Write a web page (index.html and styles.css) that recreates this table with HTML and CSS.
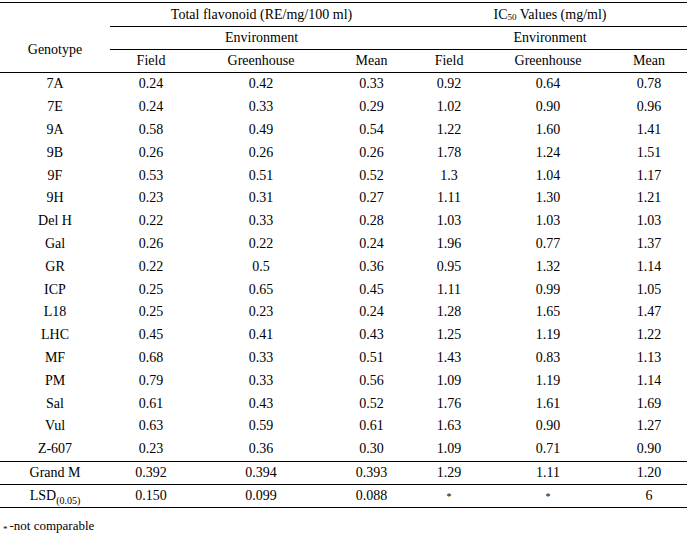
FILE: index.html
```html
<!DOCTYPE html>
<html>
<head>
<meta charset="utf-8">
<link rel="stylesheet" href="styles.css">
</head>
<body>
<table class="tbl">
  <colgroup>
    <col class="c-geno">
    <col class="c-f1">
    <col class="c-g1">
    <col class="c-m1">
    <col class="c-f2">
    <col class="c-g2">
    <col class="c-m2">
  </colgroup>
  <thead>
    <tr class="h1">
      <th class="top"></th>
      <th colspan="3" class="top rule">Total flavonoid (RE/mg/100 ml)</th>
      <th colspan="3" class="top rule">IC<sub class="sub50">50</sub> Values (mg/ml)</th>
    </tr>
    <tr class="h2">
      <th rowspan="2" class="rule">Genotype</th>
      <th colspan="3" class="rule">Environment</th>
      <th colspan="3" class="rule">Environment</th>
    </tr>
    <tr class="h3">
      <th class="rule">Field</th>
      <th class="rule">Greenhouse</th>
      <th class="rule">Mean</th>
      <th class="rule">Field</th>
      <th class="rule">Greenhouse</th>
      <th class="rule">Mean</th>
    </tr>
  </thead>
  <tbody>
    <tr><td>7A</td><td>0.24</td><td>0.42</td><td>0.33</td><td>0.92</td><td>0.64</td><td>0.78</td></tr>
    <tr><td>7E</td><td>0.24</td><td>0.33</td><td>0.29</td><td>1.02</td><td>0.90</td><td>0.96</td></tr>
    <tr><td>9A</td><td>0.58</td><td>0.49</td><td>0.54</td><td>1.22</td><td>1.60</td><td>1.41</td></tr>
    <tr><td>9B</td><td>0.26</td><td>0.26</td><td>0.26</td><td>1.78</td><td>1.24</td><td>1.51</td></tr>
    <tr><td>9F</td><td>0.53</td><td>0.51</td><td>0.52</td><td>1.3</td><td>1.04</td><td>1.17</td></tr>
    <tr><td>9H</td><td>0.23</td><td>0.31</td><td>0.27</td><td>1.11</td><td>1.30</td><td>1.21</td></tr>
    <tr><td>Del H</td><td>0.22</td><td>0.33</td><td>0.28</td><td>1.03</td><td>1.03</td><td>1.03</td></tr>
    <tr><td>Gal</td><td>0.26</td><td>0.22</td><td>0.24</td><td>1.96</td><td>0.77</td><td>1.37</td></tr>
    <tr><td>GR</td><td>0.22</td><td>0.5</td><td>0.36</td><td>0.95</td><td>1.32</td><td>1.14</td></tr>
    <tr><td>ICP</td><td>0.25</td><td>0.65</td><td>0.45</td><td>1.11</td><td>0.99</td><td>1.05</td></tr>
    <tr><td>L18</td><td>0.25</td><td>0.23</td><td>0.24</td><td>1.28</td><td>1.65</td><td>1.47</td></tr>
    <tr><td>LHC</td><td>0.45</td><td>0.41</td><td>0.43</td><td>1.25</td><td>1.19</td><td>1.22</td></tr>
    <tr><td>MF</td><td>0.68</td><td>0.33</td><td>0.51</td><td>1.43</td><td>0.83</td><td>1.13</td></tr>
    <tr><td>PM</td><td>0.79</td><td>0.33</td><td>0.56</td><td>1.09</td><td>1.19</td><td>1.14</td></tr>
    <tr><td>Sal</td><td>0.61</td><td>0.43</td><td>0.52</td><td>1.76</td><td>1.61</td><td>1.69</td></tr>
    <tr><td>Vul</td><td>0.63</td><td>0.59</td><td>0.61</td><td>1.63</td><td>0.90</td><td>1.27</td></tr>
    <tr class="last"><td>Z-607</td><td>0.23</td><td>0.36</td><td>0.30</td><td>1.09</td><td>0.71</td><td>0.90</td></tr>
    <tr class="sum"><td>Grand M</td><td>0.392</td><td>0.394</td><td>0.393</td><td>1.29</td><td>1.11</td><td>1.20</td></tr>
    <tr class="sum"><td>LSD<sub class="sublsd">(0.05)</sub></td><td>0.150</td><td>0.099</td><td>0.088</td><td><span class="ast">*</span></td><td><span class="ast">*</span></td><td>6</td></tr>
  </tbody>
</table>
<p class="note"><span class="note-ast">*</span><span class="note-text">-not comparable</span></p>
</body>
</html>
```

FILE: styles.css
```css
html, body {
  margin: 0;
  padding: 0;
  background: #ffffff;
}

body {
  font-family: "Liberation Serif", "Times New Roman", serif;
  font-size: 14px;
  color: #000000;
}

.tbl {
  width: 687px;
  table-layout: fixed;
  border-collapse: separate;
  border-spacing: 0;
  margin-top: 2px;
}

.c-geno { width: 110px; }
.c-f1 { width: 82px; }
.c-g1 { width: 138px; }
.c-m1 { width: 83px; }
.c-f2 { width: 72px; }
.c-g2 { width: 126px; }
.c-m2 { width: 76px; }

.tbl th,
.tbl td {
  padding: 0;
  text-align: center;
  vertical-align: middle;
  font-weight: normal;
  white-space: nowrap;
  line-height: 16px;
}

.tbl th.top {
  border-top: 1px solid #000;
}

.tbl th.rule {
  border-bottom: 1px solid #000;
}

.h1 { height: 25px; }
.h2 { height: 23px; }
.h3 { height: 23px; }

.tbl tbody tr { height: 22.8px; }

.tbl tbody tr.last td {
  border-bottom: 1px solid #000;
}

.tbl tbody tr.last { height: 23.8px; }

.tbl tbody tr.sum { height: 23px; }

.tbl tbody tr.sum td {
  border-bottom: 1px solid #000;
}

.sub50 {
  font-size: 9px;
  vertical-align: -1px;
  line-height: 0;
}

.sublsd {
  font-size: 10px;
  vertical-align: -4px;
  line-height: 0;
}

.ast {
  font-size: 10px;
  vertical-align: -2px;
}

.note {
  margin: 10px 0 0 0;
  padding-left: 3px;
  font-size: 13px;
  line-height: 16px;
}

.note-ast {
  font-size: 9px;
  vertical-align: -2px;
}

.note-text {
  margin-left: 2px;
}
```
